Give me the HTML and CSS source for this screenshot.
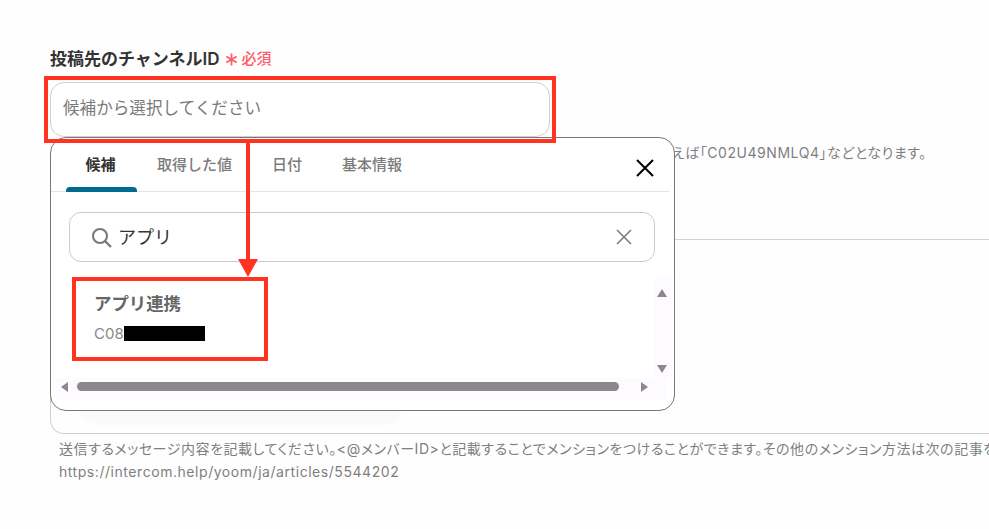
FILE: index.html
```html
<!DOCTYPE html>
<html lang="ja">
<head>
<meta charset="utf-8">
<title>投稿先のチャンネルID</title>
<link rel="stylesheet" href="styles.css">
</head>
<body>
<main class="form">
  <section class="field">
    <div class="label-row">
      <span class="label">投稿先のチャンネルID</span>
      <svg class="req-mark" width="13" height="13" viewBox="0 0 12 12"><path d="M6 0.5V11.5M1.2 3.2L10.8 8.8M10.8 3.2L1.2 8.8" stroke="#ff5a66" stroke-width="1.6" fill="none"/></svg>
      <span class="req">必須</span>
    </div>
    <div class="input">候補から選択してください</div>
    <p class="help help-top">投稿先のチャンネルIDを候補から選択してください。チャンネルIDは直接入力することも可能で、例えば「C02U49NMLQ4」などとなります。</p>
  </section>
  <hr class="divider">
  <section class="field message">
    <div class="textarea"><div class="ghost"></div></div>
    <p class="help help-bottom">送信するメッセージ内容を記載してください。&lt;@メンバーID&gt;と記載することでメンションをつけることができます。その他のメンション方法は次の記事をご確認ください。<br>https://intercom.help/yoom/ja/articles/5544202</p>
  </section>
</main>

<div class="popup">
  <nav class="tabs">
    <span class="tab active">候補</span>
    <span class="tab">取得した値</span>
    <span class="tab">日付</span>
    <span class="tab">基本情報</span>
    <svg class="close" width="18" height="18" viewBox="0 0 18 18"><path d="M1 1L17 17M17 1L1 17" stroke="#000" stroke-width="2" fill="none"/></svg>
  </nav>
  <div class="search">
    <svg class="search-icon" width="21" height="21" viewBox="0 0 21 21"><circle cx="9" cy="9" r="7" stroke="#777" stroke-width="2" fill="none"/><path d="M14 14L20 20" stroke="#777" stroke-width="2.2" fill="none"/></svg>
    <span class="query">アプリ</span>
    <svg class="clear" width="16" height="16" viewBox="0 0 16 16"><path d="M1 1L15 15M15 1L1 15" stroke="#808080" stroke-width="1.7" fill="none"/></svg>
  </div>
  <div class="results">
    <div class="result">
      <div class="result-title">アプリ連携</div>
      <div class="result-id">C08<span class="redact"></span></div>
    </div>
    <div class="vscroll">
      <span class="tri tri-up"></span>
      <span class="tri tri-down"></span>
    </div>
  </div>
  <div class="hscroll">
    <span class="tri tri-left"></span>
    <span class="thumb"></span>
    <span class="tri tri-right"></span>
  </div>
</div>

<div class="mark mark-input"></div>
<div class="mark mark-result"></div>
<div class="arrow-line"></div>
<div class="arrow-head"></div>
</body>
</html>
```

FILE: styles.css
```css
* { box-sizing: border-box; }
html, body { margin: 0; height: 100%; }
body {
  position: relative;
  width: 989px;
  height: 529px;
  overflow: hidden;
  background: #fefefe;
  font-family: Inter, "Noto Sans CJK JP", sans-serif;
}
.form { padding: 46px 0 0 50px; width: 1400px; }
.label-row { display: flex; align-items: center; height: 23px; }
.label { font-size: 17px; font-weight: 600; color: #333; }
.req-mark { margin-left: 6px; margin-top: 3px; flex: none; }
.req { margin-left: 3px; font-size: 15px; font-weight: 500; color: #ff5a66; }
.input {
  width: 500px;
  height: 55px;
  margin-top: 13px;
  padding: 0 12px;
  border: 1px solid #d0d0d0;
  border-radius: 14px;
  font-size: 16.6px;
  line-height: 50px;
  color: #7a7a7a;
  background: #fff;
}
.help {
  margin: 0;
  font-size: 14px;
  color: #7f7f7f;
  letter-spacing: .55px;
  line-height: 23px;
  white-space: nowrap;
  font-feature-settings: "palt";
}
.help-top { margin-top: 4px; padding-left: 18px; }
.divider { margin: 75px 0 0; border: 0; border-top: 1px solid #d2d2da; }
.textarea {
  position: relative;
  height: 194px;
  border: 1px solid #d0d0d0;
  border-top: 0;
  border-right: 0;
  border-radius: 0 0 0 14px;
}
.ghost {
  position: absolute;
  left: 30px;
  top: 168px;
  width: 320px;
  height: 12px;
  background: #fafafa;
  border-radius: 0 0 14px 14px;
  box-shadow: 0 2px 8px rgba(0,0,0,.03);
}
.help-bottom { margin-top: 3px; padding-left: 9px; }
.popup {
  position: absolute;
  left: 50px;
  top: 137px;
  width: 625px;
  height: 274px;
  background: #fff;
  border: 1px solid #777;
  border-radius: 16px;
}
.tabs {
  position: relative;
  display: flex;
  height: 54px;
  margin-right: 5px;
  padding-left: 15px;
  border-bottom: 1px solid #e4e4e4;
}
.tab {
  position: relative;
  padding: 17px 0 0;
  margin-right: 40px;
  font-size: 15px;
  line-height: 20px;
  font-weight: 500;
  color: #7b7b7b;
}
.tab.active { width: 71px; margin-right: 20px; padding-right: 2px; text-align: center; color: #333; font-weight: 600; }
.tab.active::after {
  content: "";
  position: absolute;
  left: 0;
  right: 0;
  bottom: -1px;
  height: 5px;
  background: #006a8f;
  border-radius: 4px 4px 0 0;
}
.close { position: absolute; left: 585px; top: 21px; }
.search {
  display: flex;
  align-items: center;
  width: 586px;
  height: 50px;
  margin: 20px 0 0 18px;
  padding: 0 22px 0 21px;
  border: 1px solid #ccc;
  border-radius: 12px;
}
.query { margin-left: 6px; margin-top: -3px; font-size: 18px; color: #333; flex: 1; }
.results { display: flex; height: 101px; margin-top: 15px; }
.result { width: 196px; margin-left: 21px; padding: 15px 0 0 22px; flex: none; }
.result-title { font-size: 17.4px; font-weight: 600; line-height: 24px; color: #666; }
.result-id { display: flex; align-items: center; height: 18px; margin-top: 8px; font-size: 15px; color: #888; }
.redact { display: inline-block; width: 81px; height: 15px; background: #000; margin-left: 0; }
.vscroll {
  position: relative;
  width: 18px;
  margin-left: auto;
  margin-right: 1px;
  background: #fdfbff;
}
.tri { position: absolute; width: 0; height: 0; border-style: solid; border-color: transparent; }
.tri-up { left: 2px; top: 12px; border-width: 0 5px 8px; border-bottom-color: #8a888c; }
.tri-down { left: 2px; top: 88px; border-width: 8px 5px 0; border-top-color: #8a888c; }
.hscroll { position: relative; height: 22px; margin: 0 8px 0 5px; background: #fdfbff; }
.tri-left { left: 5px; top: 4px; border-width: 5px 7px 5px 0; border-right-color: #8a888c; }
.tri-right { left: 585px; top: 4px; border-width: 5px 0 5px 7px; border-left-color: #8a888c; }
.thumb { position: absolute; left: 21px; top: 4px; width: 542px; height: 9px; border-radius: 5px; background: #8a888c; }
.mark { position: absolute; border: 4px solid #ff3320; }
.mark-input { left: 44px; top: 76px; width: 512px; height: 67px; }
.mark-result { left: 72px; top: 277px; width: 196px; height: 84px; }
.arrow-line { position: absolute; left: 246px; top: 143px; width: 4px; height: 118px; background: #ff3320; }
.arrow-head {
  position: absolute;
  left: 238px;
  top: 259px;
  width: 0;
  height: 0;
  border-style: solid;
  border-width: 18px 10px 0;
  border-color: #ff3320 transparent transparent;
}
```
